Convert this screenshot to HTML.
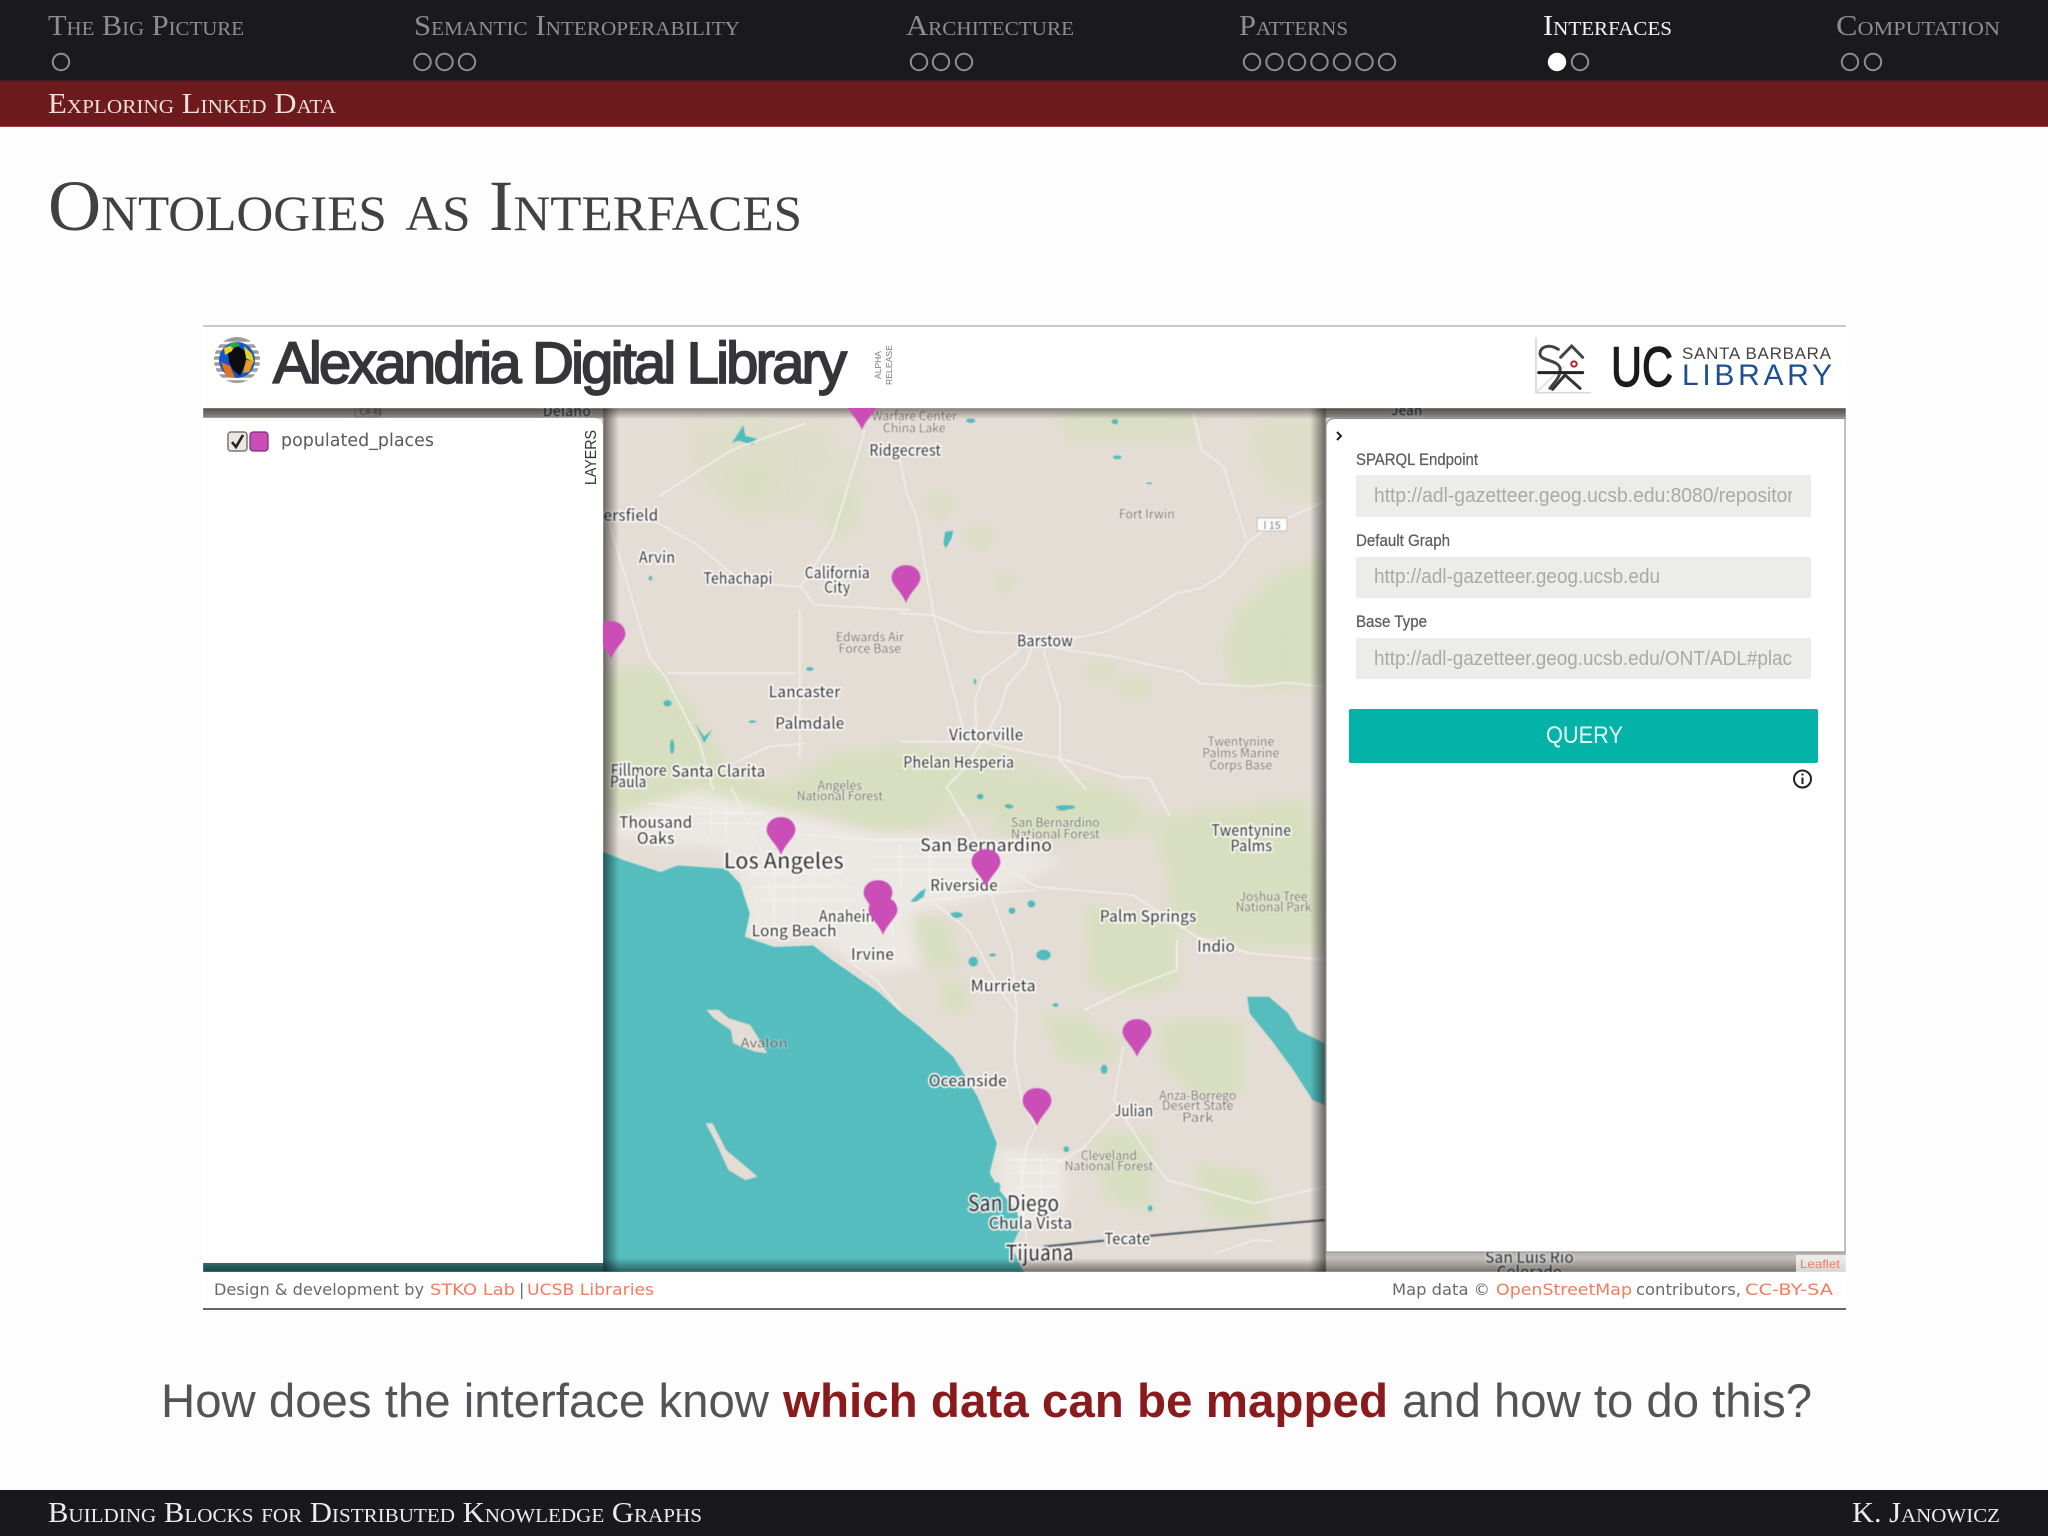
<!DOCTYPE html>
<html><head><meta charset="utf-8"><title>Ontologies as Interfaces</title>
<style>
html,body{margin:0;padding:0;background:#fdfdfe}
svg{display:block}
.sc{font-family:"Liberation Serif",serif;font-variant:small-caps}
.m{font-family:"Noto Sans CJK JP","Liberation Sans",sans-serif;font-size:12.5px;fill:#2e2e2e;text-anchor:middle;stroke:#fff;stroke-width:2.4px;stroke-opacity:.85;paint-order:stroke;stroke-linejoin:round;font-weight:500}
.g{font-family:"Noto Sans CJK JP","Liberation Sans",sans-serif;font-size:10px;fill:#75716c;text-anchor:middle;stroke:#fff;stroke-width:1.2px;stroke-opacity:.4;paint-order:stroke}
.l{font-size:16.5px}
.lab{font-family:"Liberation Sans",sans-serif;font-size:17px;fill:#5c5c5c;stroke:#5c5c5c;stroke-width:.25px}
.inp{font-family:"Liberation Sans",sans-serif;font-size:20px;fill:#a9a9a7}
.foot{font-family:"DejaVu Sans","Liberation Sans",sans-serif;font-size:16px;fill:#6a6a6a}
.or{fill:#f37c5e}
.road{fill:none;stroke:#f1eee9;stroke-width:1.6;vector-effect:non-scaling-stroke;stroke-linejoin:round}
.road2{fill:none;stroke:#f6f4f0;stroke-width:1;vector-effect:non-scaling-stroke}
</style></head><body>
<svg xmlns="http://www.w3.org/2000/svg" width="2048" height="1536" viewBox="0 0 2048 1536">
<defs>
<clipPath id="mapc"><rect x="203" y="408" width="1643" height="864"/></clipPath>
<clipPath id="i1"><rect x="1374" y="475" width="418" height="42"/></clipPath>
<clipPath id="i3"><rect x="1374" y="638" width="418" height="42"/></clipPath>
<filter id="b6" x="-30%" y="-30%" width="160%" height="160%"><feGaussianBlur stdDeviation="6"/></filter>
<filter id="b16" x="-30%" y="-30%" width="160%" height="160%"><feGaussianBlur stdDeviation="16"/></filter>
<filter id="b1" x="0" y="0" width="100%" height="100%"><feGaussianBlur stdDeviation="0.5"/></filter>
<linearGradient id="sr" x1="0" x2="1" y1="0" y2="0"><stop offset="0" stop-color="#000" stop-opacity=".55"/><stop offset="1" stop-color="#000" stop-opacity="0"/></linearGradient>
<linearGradient id="sl" x1="1" x2="0" y1="0" y2="0"><stop offset="0" stop-color="#000" stop-opacity=".55"/><stop offset="1" stop-color="#000" stop-opacity="0"/></linearGradient>
<linearGradient id="st" x1="0" x2="0" y1="0" y2="1"><stop offset="0" stop-color="#000" stop-opacity=".45"/><stop offset="1" stop-color="#000" stop-opacity="0"/></linearGradient>
<linearGradient id="sb" x1="0" x2="0" y1="1" y2="0"><stop offset="0" stop-color="#000" stop-opacity=".5"/><stop offset="1" stop-color="#000" stop-opacity="0"/></linearGradient>
<path id="pin" d="M0 0C-5 -12 -14.5 -18 -14.5 -25C-14.5 -33 -8 -38 0 -38C8 -38 14.5 -33 14.5 -25C14.5 -18 5 -12 0 0Z" fill="#cb4db7"/>
</defs>

<rect width="2048" height="1536" fill="#fdfdfe"/>

<!-- top nav -->
<rect width="2048" height="81" fill="#1a1a1c"/>
<rect y="81" width="2048" height="46" fill="#6d1a1c"/>
<rect y="80" width="2048" height="2" fill="#4a1a20"/>
<rect y="126" width="2048" height="1" fill="#b03a44"/>
<g fill="#8d8d8d" font-size="29" class="sc">
<text x="48" y="35" textLength="196" lengthAdjust="spacingAndGlyphs">The Big Picture</text>
<text x="414" y="35" textLength="326" lengthAdjust="spacingAndGlyphs">Semantic Interoperability</text>
<text x="906" y="35" textLength="168" lengthAdjust="spacingAndGlyphs">Architecture</text>
<text x="1239" y="35" textLength="109" lengthAdjust="spacingAndGlyphs">Patterns</text>
<text x="1543" y="35" textLength="129" lengthAdjust="spacingAndGlyphs" fill="#f4f4f4">Interfaces</text>
<text x="1836" y="35" textLength="164" lengthAdjust="spacingAndGlyphs">Computation</text>
</g>
<g fill="none" stroke="#8d8d8d" stroke-width="2">
<circle cx="61" cy="62" r="8.2"/>
<circle cx="422.5" cy="62" r="8.2"/><circle cx="444.5" cy="62" r="8.2"/><circle cx="467" cy="62" r="8.2"/>
<circle cx="919" cy="62" r="8.2"/><circle cx="941" cy="62" r="8.2"/><circle cx="964" cy="62" r="8.2"/>
<circle cx="1252" cy="62" r="8.2"/><circle cx="1274.5" cy="62" r="8.2"/><circle cx="1297" cy="62" r="8.2"/><circle cx="1319.5" cy="62" r="8.2"/><circle cx="1342" cy="62" r="8.2"/><circle cx="1364.5" cy="62" r="8.2"/><circle cx="1387" cy="62" r="8.2"/>
<circle cx="1580" cy="62" r="8.2"/>
<circle cx="1850" cy="62" r="8.2"/><circle cx="1873" cy="62" r="8.2"/>
</g>
<circle cx="1557" cy="62" r="9.2" fill="#fff"/>
<text x="48" y="113" class="sc" font-size="29" fill="#efe0da" textLength="288" lengthAdjust="spacingAndGlyphs">Exploring Linked Data</text>

<!-- title -->
<text x="48" y="230" class="sc" font-size="72" fill="#414143" textLength="754" lengthAdjust="spacingAndGlyphs">Ontologies as Interfaces</text>

<!-- app header -->
<rect x="203" y="325" width="1643" height="2" fill="#c9c9c9"/>
<rect x="203" y="327" width="1643" height="81" fill="#fff"/>

<!-- globe -->
<g>
<circle cx="237" cy="360" r="23" fill="#9b9b9b"/>
<g stroke="#fff" stroke-width="2.4"><path d="M212 343H262M212 349H262M212 355H262M212 361H262M212 367H262M212 373H262M212 379H262"/></g>
<circle cx="237" cy="360" r="18" fill="#1556c8"/>
<path d="M228 352L238 346L246 352L246 362L240 376L233 370L229 362Z" fill="#0b0b10"/>
<path d="M224 348L235 344L232 351L225 355ZM244 346L252 354L254 362L246 358Z" fill="#e9d31d"/>
<path d="M221 362L230 366L235 378L226 376Z" fill="#e8701c"/>
<path d="M246 360L254 361L249 372L243 373Z" fill="#ef9a1c"/>
<path d="M229 343L238 342L240 346L232 348Z" fill="#27a844"/>
</g>
<text x="273" y="383" font-family="'Liberation Sans',sans-serif" font-size="58" fill="#35353a" stroke="#35353a" stroke-width="1.8" textLength="574" lengthAdjust="spacing">Alexandria Digital Library</text>
<g font-family="'Liberation Sans',sans-serif" font-size="8" fill="#777">
<text transform="translate(881,379) rotate(-90)" textLength="28" lengthAdjust="spacingAndGlyphs">ALPHA</text>
<text transform="translate(892,385) rotate(-90)" textLength="40" lengthAdjust="spacingAndGlyphs">RELEASE</text>
</g>

<!-- SK logo -->
<g transform="translate(1500,320) scale(.3333)" fill="none" stroke-linecap="round">
<path d="M108 55V218H270" stroke="#d8d8d8" stroke-width="5"/>
<path d="M112 214L190 140" stroke="#e0e0e0" stroke-width="5"/>
<path d="M175 88C150 72 122 78 120 100C119 125 175 118 180 145C184 170 160 190 150 205" stroke="#444" stroke-width="9"/>
<path d="M116 158H248" stroke="#222" stroke-width="9"/>
<path d="M182 112L215 78L248 112" stroke="#444" stroke-width="9"/>
<path d="M195 165L240 205M195 165L158 208" stroke="#333" stroke-width="9"/>
<circle cx="222" cy="132" r="8" stroke="#b4222e" stroke-width="6"/>
</g>
<text x="1611" y="386" font-family="'Liberation Sans',sans-serif" font-size="56" fill="#1b1b1e" stroke="#1b1b1e" stroke-width="1.4" textLength="62" lengthAdjust="spacingAndGlyphs">UC</text>
<text x="1682" y="359" font-family="'Liberation Sans',sans-serif" font-size="17" fill="#444" textLength="149" lengthAdjust="spacing">SANTA BARBARA</text>
<text x="1682" y="385" font-family="'Liberation Sans',sans-serif" font-size="30" fill="#1d4f92" textLength="150" lengthAdjust="spacing">LIBRARY</text>

<!-- MAP -->
<g clip-path="url(#mapc)">
<g filter="url(#b1)">
<rect x="203" y="408" width="1643" height="864" fill="#e4ddd6"/>

<!-- green patches in full-view coordinates -->
<g transform="scale(1.30612)" fill="#d8dfc0" filter="url(#b6)">
<path d="M525 325L575 320L640 325L620 395L570 400L530 370Z" opacity=".55"/>
<path d="M630 340L665 345L662 400L640 420L625 395Z" opacity=".45"/>
<path d="M812 315H895V332H812Z" opacity=".55"/>
<path d="M960 320H1015V385L975 380L955 350Z" opacity=".65"/>
<path d="M945 470L975 440L1015 425V525H950L945 495Z"/>
<path d="M463 520L500 510L530 540L560 590L600 600L640 575L700 570L760 590L850 600L870 640L800 620L700 625L620 625L570 625L500 625L463 625Z"/>
<path d="M880 625L1000 610L1015 660V715L940 690L890 660Z"/>
<path d="M690 590L760 570L830 600L790 625L700 620Z" opacity=".8"/>
</g>
<!-- zoom5 coordinate space -->
<g transform="translate(600,780) scale(.4847,.3333)">
<g fill="#d8dfc0" filter="url(#b16)">
<path d="M640 410L720 420L745 560L690 580L650 500Z"/>
<path d="M700 600L765 610L760 710L710 700Z"/>
<path d="M910 700L1000 710L1080 800L1040 860L950 840Z"/>
<path d="M1000 370L1190 430L1200 620L1100 650L1010 620Z"/>
<path d="M1170 230L1490 240V500L1330 500L1180 440Z"/>
<path d="M1150 720L1330 720V950L1220 940L1160 860Z"/>
<path d="M1020 1060L1140 1060L1140 1300L1040 1260Z"/>
<path d="M1220 1140L1370 1180L1380 1330L1260 1320Z"/>
<path d="M480 60L660 30L720 120L600 170L500 130Z"/>
<path d="M800 60L1100 40L1150 150L960 180L820 170Z"/>
</g>
<!-- urban -->
<g fill="#ece8e3" filter="url(#b16)">
<path d="M200 30L560 160L720 170L960 240L820 340L640 400L660 560L560 580L450 480L300 480L290 300L240 200L130 200L30 160L40 110Z"/>
<path d="M820 1100L960 1130L960 1280L880 1340L820 1280Z"/>
</g>
<!-- ocean -->
<path fill="#54bdbe" stroke="#fff" stroke-opacity=".5" stroke-width="2" d="M8 215L50 240L125 275L160 255L260 265L290 310L310 400L300 470L360 500L440 495L480 540L520 580L575 635L620 695L660 740L730 830L780 950L820 1090L805 1180L830 1240L860 1290L870 1340L850 1400L880 1490L-900 1490V215Z"/>
<path fill="#e4ddd6" d="M220 690L245 690L265 715L310 735L325 770L345 820L320 815L275 790L270 750L235 715Z"/>
<path fill="#e4ddd6" d="M218 1030L232 1030L260 1110L325 1190L300 1200L265 1170L240 1090Z"/>
<path fill="#54bdbe" d="M1335 650L1380 650L1420 700L1440 750L1495 790V975L1470 960L1430 870L1390 790L1340 700Z"/>
<!-- small water -->
<g fill="#4fbcbe">
<path d="M640 365L660 335L672 325L668 350L650 368Z"/>
<ellipse cx="735" cy="405" rx="13" ry="9"/><ellipse cx="890" cy="372" rx="8" ry="11"/><ellipse cx="850" cy="392" rx="7" ry="10"/>
<ellipse cx="770" cy="545" rx="10" ry="15"/><ellipse cx="915" cy="525" rx="15" ry="16"/><ellipse cx="960" cy="82" rx="20" ry="7"/>
<ellipse cx="845" cy="80" rx="8" ry="6"/><ellipse cx="785" cy="50" rx="6" ry="9"/><ellipse cx="810" cy="525" rx="7" ry="5"/>
<ellipse cx="940" cy="675" rx="6" ry="6"/><ellipse cx="1040" cy="868" rx="7" ry="14"/><ellipse cx="962" cy="1108" rx="6" ry="9"/>
<ellipse cx="1135" cy="1285" rx="5" ry="9"/><ellipse cx="820" cy="1220" rx="6" ry="14"/>
</g>
<!-- roads -->
<g class="road">
<path class="road" d="M400 160L560 180L680 180L800 230L900 320L1100 345L1230 470L1340 520L1495 540"/>
<path class="road" d="M800 320L850 520L860 700L855 830L870 960L900 1040L880 1100L870 1230L880 1380"/>
<path class="road" d="M690 370L760 450L830 640L860 700"/>
<path class="road" d="M620 690L570 600L510 540"/>
<path class="road" d="M270 20L330 200L360 400M100 70L300 100M450 270L600 400L610 560"/>
<path class="road" d="M610 375L800 340L900 330"/>
<path class="road" d="M740 80L760 130L790 220"/>
<path class="road" d="M1000 690L1100 620L1190 570L1190 480"/>
<path class="road" d="M1080 800L1060 960L1120 1100L1170 1200L1350 1270L1495 1220"/>
<path class="road" d="M910 1180L1000 1100L1060 1000"/>
<path class="road" d="M1270 1420L1350 1380L1390 1385"/>
</g>
<g class="road2">
<path class="road2" d="M230 70V170M260 70V190M200 100H340M200 130H340M310 280H500M320 320H520M320 360H540M360 260V460M400 250V460M440 250V470M620 190V320M680 190V320M560 230H780M560 270H780M840 1140H950M850 1180H950M860 1220H950M870 1130V1290M910 1130V1290"/>
</g>
<path d="M915 1400L1040 1382M1130 1368L1495 1320" stroke="#5a6570" stroke-width="2.5" vector-effect="non-scaling-stroke" fill="none"/>
</g>
<!-- zoom7 coordinate space -->
<g transform="translate(900,400) scale(.3333)">
<g fill="#d8dfc0" filter="url(#b16)" opacity=".7">
<ellipse cx="120" cy="315" rx="48" ry="50"/><ellipse cx="240" cy="410" rx="42" ry="48"/><ellipse cx="315" cy="545" rx="38" ry="40"/>
<rect x="555" y="780" width="95" height="70"/><rect x="660" y="825" width="95" height="80"/><rect x="500" y="30" width="390" height="100"/>
<path d="M970 720L1020 630L1170 650L1180 860L980 850Z"/>
</g>
<g fill="#4fbcbe">
<ellipse cx="212" cy="62" rx="14" ry="7"/><ellipse cx="645" cy="65" rx="10" ry="8"/><ellipse cx="652" cy="172" rx="13" ry="6"/>
<path d="M135 395L160 392L155 415L138 445L130 432Z"/><ellipse cx="748" cy="250" rx="9" ry="3"/>
<ellipse cx="240" cy="1190" rx="10" ry="8"/><ellipse cx="325" cy="1218" rx="11" ry="6"/><path d="M465 1232L525 1215L495 1232Z"/><ellipse cx="225" cy="845" rx="4" ry="9"/>
</g>
<g class="road">
<path class="road" d="M520 715L620 695L750 630L830 580L900 565L960 530L1000 490L1040 430L1100 385L1270 305"/>
<path class="road" d="M470 745L640 770L850 815L900 850L1050 860L1160 848L1270 860"/>
<path class="road" d="M395 745L380 790L320 860L300 930L200 1100L140 1160L190 1250"/>
<path class="road" d="M0 640L100 645L220 695L350 700"/>
<path class="road" d="M0 180L20 280L50 350L100 640L190 990"/>
<path class="road" d="M430 750L480 920L480 1080L560 1170M360 750L250 830L225 900L230 1010"/>
<path class="road" d="M0 1025H240L350 1050L480 1075L660 1130L750 1135L810 1250"/>
<path class="road" d="M880 40L905 150L970 200L1040 420"/>
</g>
</g>
<!-- zoom3 coordinate space -->
<g transform="translate(190,310) scale(.4591,.3333)">
<g fill="#d8dfc0" filter="url(#b16)" opacity=".8">
<path d="M900 1080L1030 1080L1130 1380L900 1440Z"/>
<path d="M1170 480L1290 450L1250 610L1190 560Z"/>
<path d="M1390 560L1450 540L1440 680L1400 660Z"/>
</g>
<g fill="#4fbcbe">
<path d="M1180 400L1205 345L1210 378L1235 385L1225 405L1195 392Z"/>
<path d="M1100 1240L1120 1280L1138 1258L1120 1300Z"/><ellipse cx="1050" cy="1310" rx="5" ry="22"/><ellipse cx="1040" cy="1180" rx="9" ry="10"/>
<ellipse cx="1350" cy="1077" rx="8" ry="6"/><ellipse cx="1225" cy="1235" rx="8" ry="4"/><ellipse cx="1003" cy="805" rx="4" ry="7"/>
</g>
<g class="road">
<path class="road" d="M905 600L1000 1040L1035 1100L1110 1300L1140 1440"/>
<path class="road" d="M1020 640L1100 700L1180 790L1190 815L1330 830L1360 885L1568 900"/>
<path class="road" d="M1328 900V1340"/>
<path class="road" d="M1470 360L1400 680L1330 830"/>
<path class="road" d="M1020 560L1180 420L1340 340"/>
<path class="road" d="M1040 1090H1320"/>
<path class="road" d="M1140 1390L1260 1310L1340 1300"/>
</g>
</g>

<!-- labels -->
<g transform="scale(1.30612)">
<text class="g" x="700" y="322" textLength="65" lengthAdjust="spacingAndGlyphs">Warfare Center</text>
<text class="g" x="700" y="331" textLength="48" lengthAdjust="spacingAndGlyphs">China Lake</text>
<text class="m" x="693" y="349" textLength="55" lengthAdjust="spacingAndGlyphs">Ridgecrest</text>
<text class="g" x="878" y="397" textLength="43" lengthAdjust="spacingAndGlyphs">Fort Irwin</text>
<text class="m" x="483" y="399" textLength="42" lengthAdjust="spacingAndGlyphs">ersfield</text>
<text class="m" x="503" y="431" textLength="28" lengthAdjust="spacingAndGlyphs">Arvin</text>
<text class="m" x="565" y="447" textLength="53" lengthAdjust="spacingAndGlyphs">Tehachapi</text>
<text class="m" x="641" y="443" textLength="50" lengthAdjust="spacingAndGlyphs">California</text>
<text class="m" x="641" y="454" textLength="20" lengthAdjust="spacingAndGlyphs">City</text>
<text class="g" x="666" y="491" textLength="52" lengthAdjust="spacingAndGlyphs">Edwards Air</text>
<text class="g" x="666" y="500" textLength="48" lengthAdjust="spacingAndGlyphs">Force Base</text>
<text class="m" x="800" y="495" textLength="43" lengthAdjust="spacingAndGlyphs">Barstow</text>
<text class="m" x="616" y="534" textLength="55" lengthAdjust="spacingAndGlyphs">Lancaster</text>
<text class="m" x="620" y="558" textLength="53" lengthAdjust="spacingAndGlyphs">Palmdale</text>
<text class="m" x="755" y="567" textLength="57" lengthAdjust="spacingAndGlyphs">Victorville</text>
<text class="m" x="734" y="588" textLength="85" lengthAdjust="spacingAndGlyphs">Phelan Hesperia</text>
<text class="g" x="950" y="571" textLength="51" lengthAdjust="spacingAndGlyphs">Twentynine</text>
<text class="g" x="950" y="580" textLength="59" lengthAdjust="spacingAndGlyphs">Palms Marine</text>
<text class="g" x="950" y="589" textLength="48" lengthAdjust="spacingAndGlyphs">Corps Base</text>
<text class="m" x="489" y="594" textLength="43" lengthAdjust="spacingAndGlyphs">Fillmore</text>
<text class="m" x="550" y="595" textLength="72" lengthAdjust="spacingAndGlyphs">Santa Clarita</text>
<text class="m" x="481" y="603" textLength="28" lengthAdjust="spacingAndGlyphs">Paula</text>
<text class="g" x="643" y="605" textLength="34" lengthAdjust="spacingAndGlyphs">Angeles</text>
<text class="g" x="643" y="613" textLength="66" lengthAdjust="spacingAndGlyphs">National Forest</text>
<text class="m" x="502" y="634" textLength="56" lengthAdjust="spacingAndGlyphs">Thousand</text>
<text class="m" x="502" y="646" textLength="29" lengthAdjust="spacingAndGlyphs">Oaks</text>
<text class="m l" x="600" y="665" textLength="92" lengthAdjust="spacingAndGlyphs">Los Angeles</text>
<text class="g" x="808" y="633" textLength="68" lengthAdjust="spacingAndGlyphs">San Bernardino</text>
<text class="g" x="808" y="642" textLength="68" lengthAdjust="spacingAndGlyphs">National Forest</text>
<text class="m" x="755" y="652" style="font-size:14px" textLength="101" lengthAdjust="spacingAndGlyphs">San Bernardino</text>
<text class="m" x="958" y="640" textLength="61" lengthAdjust="spacingAndGlyphs">Twentynine</text>
<text class="m" x="958" y="652" textLength="32" lengthAdjust="spacingAndGlyphs">Palms</text>
<text class="m" x="738" y="682" textLength="52" lengthAdjust="spacingAndGlyphs">Riverside</text>
<text class="g" x="975" y="690" textLength="52" lengthAdjust="spacingAndGlyphs">Joshua Tree</text>
<text class="g" x="975" y="698" textLength="58" lengthAdjust="spacingAndGlyphs">National Park</text>
<text class="m" x="650" y="706" textLength="46" lengthAdjust="spacingAndGlyphs">Anaheim</text>
<text class="m" x="608" y="717" textLength="65" lengthAdjust="spacingAndGlyphs">Long Beach</text>
<text class="m" x="879" y="706" textLength="74" lengthAdjust="spacingAndGlyphs">Palm Springs</text>
<text class="m" x="931" y="729" textLength="29" lengthAdjust="spacingAndGlyphs">Indio</text>
<text class="m" x="668" y="735" textLength="33" lengthAdjust="spacingAndGlyphs">Irvine</text>
<text class="m" x="768" y="759" textLength="50" lengthAdjust="spacingAndGlyphs">Murrieta</text>
<text class="g" x="585" y="802" style="fill:#555" textLength="36" lengthAdjust="spacingAndGlyphs">Avalon</text>
<text class="m" x="741" y="832" textLength="60" lengthAdjust="spacingAndGlyphs">Oceanside</text>
<text class="m" x="868" y="855" textLength="30" lengthAdjust="spacingAndGlyphs">Julian</text>
<text class="g" x="917" y="842" textLength="59" lengthAdjust="spacingAndGlyphs">Anza-Borrego</text>
<text class="g" x="917" y="850" textLength="55" lengthAdjust="spacingAndGlyphs">Desert State</text>
<text class="g" x="917" y="859" textLength="24" lengthAdjust="spacingAndGlyphs">Park</text>
<text class="g" x="849" y="888" textLength="43" lengthAdjust="spacingAndGlyphs">Cleveland</text>
<text class="g" x="849" y="896" textLength="68" lengthAdjust="spacingAndGlyphs">National Forest</text>
<text class="m l" x="776" y="927" textLength="70" lengthAdjust="spacingAndGlyphs">San Diego</text>
<text class="m" x="789" y="941" textLength="64" lengthAdjust="spacingAndGlyphs">Chula Vista</text>
<text class="m" x="863" y="953" textLength="35" lengthAdjust="spacingAndGlyphs">Tecate</text>
<text class="m l" x="796" y="965" textLength="52" lengthAdjust="spacingAndGlyphs">Tijuana</text>
<text class="m" x="1171" y="967" textLength="68" lengthAdjust="spacingAndGlyphs">San Luis Rio</text>
<text class="m" x="1171" y="978" textLength="50" lengthAdjust="spacingAndGlyphs">Colorado</text>
<text class="m" x="434" y="319" textLength="37" lengthAdjust="spacingAndGlyphs">Delano</text>
<text class="m" x="1077" y="318" textLength="24" lengthAdjust="spacingAndGlyphs">Jean</text>
</g>
<rect x="1257" y="518" width="30" height="13" fill="#fbfbf9" stroke="#bbb"/>
<text x="1272" y="529" font-family="'Noto Sans CJK JP',sans-serif" font-size="10.5" text-anchor="middle" fill="#555">I 15</text>
<rect x="355" y="408" width="24" height="9" fill="#e4ddd6" stroke="#aaa"/>
<text x="371" y="415" font-family="'Noto Sans CJK JP',sans-serif" font-size="9" text-anchor="middle" fill="#555">CA 41</text>

<!-- shadows -->
<rect x="603" y="408" width="16" height="864" fill="url(#sr)"/>
<rect x="1310" y="408" width="16" height="864" fill="url(#sl)"/>
<rect x="203" y="408" width="1643" height="11" fill="url(#st)"/>
<rect x="203" y="1258" width="1643" height="14" fill="url(#sb)"/>
<rect x="203" y="408" width="400" height="10" fill="#000" opacity=".35"/>
<rect x="1326" y="408" width="520" height="10" fill="#000" opacity=".35"/>
<rect x="203" y="1262" width="400" height="10" fill="#000" opacity=".3"/>
<rect x="1326" y="1252" width="520" height="20" fill="url(#sb)" opacity=".4" transform="rotate(180 1586 1262)"/>

<!-- pins -->
<use href="#pin" x="862" y="430"/>
<use href="#pin" x="906" y="603"/>
<use href="#pin" x="611" y="659"/>
<use href="#pin" x="781" y="855"/>
<use href="#pin" x="986" y="887"/>
<use href="#pin" x="878" y="918"/>
<use href="#pin" x="883" y="935"/>
<use href="#pin" x="1137" y="1057"/>
<use href="#pin" x="1037" y="1126"/>
</g>
</g>

<!-- left panel -->
<path d="M203 418H593Q603 418 603 428V1263H203Z" fill="#fff"/>
<rect x="228" y="432" width="19" height="19" rx="3" fill="#eae6e2" stroke="#777" stroke-width="1.5"/>
<path d="M232 442L236 447L243 435" fill="none" stroke="#2a2222" stroke-width="2.6"/>
<rect x="250" y="432" width="18" height="19" rx="3" fill="#cb4db7" stroke="#77306f" stroke-width="1.2"/>
<text x="281" y="446" font-family="'DejaVu Sans',sans-serif" font-size="18" fill="#5a5a5a" textLength="153" lengthAdjust="spacingAndGlyphs">populated_places</text>
<text transform="translate(596,485) rotate(-90)" font-family="'Liberation Sans',sans-serif" font-size="16" fill="#333" textLength="55" lengthAdjust="spacingAndGlyphs">LAYERS</text>

<!-- right panel -->
<path d="M1336 418.500H1845V1252H1326V428Q1326 418.500 1336 418.500Z" fill="#fff" stroke="#8a8a8a" stroke-width="1"/>
<path d="M1337 432L1341 436L1337 440" fill="none" stroke="#222" stroke-width="2"/>
<text x="1356" y="465" class="lab" textLength="122" lengthAdjust="spacingAndGlyphs">SPARQL Endpoint</text>
<rect x="1356" y="475" width="455" height="42" fill="#ececea"/>
<g clip-path="url(#i1)"><text x="1374" y="502" class="inp" textLength="424" lengthAdjust="spacingAndGlyphs">http://adl-gazetteer.geog.ucsb.edu:8080/repositori</text></g>
<text x="1356" y="546" class="lab" textLength="94" lengthAdjust="spacingAndGlyphs">Default Graph</text>
<rect x="1356" y="557" width="455" height="41" fill="#ececea"/>
<text x="1374" y="583" class="inp" textLength="286" lengthAdjust="spacingAndGlyphs">http://adl-gazetteer.geog.ucsb.edu</text>
<text x="1356" y="627" class="lab" textLength="71" lengthAdjust="spacingAndGlyphs">Base Type</text>
<rect x="1356" y="638" width="455" height="41" fill="#ececea"/>
<g clip-path="url(#i3)"><text x="1374" y="665" class="inp" textLength="418" lengthAdjust="spacingAndGlyphs">http://adl-gazetteer.geog.ucsb.edu/ONT/ADL#plac</text></g>
<rect x="1349" y="709" width="469" height="54" rx="2" fill="#04b3a8"/>
<text x="1546" y="743" font-family="'Liberation Sans',sans-serif" font-size="24" fill="#e9fbf9" textLength="77" lengthAdjust="spacingAndGlyphs">QUERY</text>
<circle cx="1802.500" cy="779" r="8.500" fill="none" stroke="#222" stroke-width="2"/>
<path d="M1802.500 777.500V784M1802.500 773.500V775.500" stroke="#222" stroke-width="2"/>

<!-- leaflet -->
<rect x="1796" y="1255" width="50" height="17" fill="#fff" opacity=".7"/>
<text x="1800" y="1268" font-family="'Liberation Sans',sans-serif" font-size="12" fill="#f37c5e" textLength="40" lengthAdjust="spacingAndGlyphs">Leaflet</text>

<!-- app footer -->
<rect x="203" y="1272" width="1643" height="36" fill="#fff"/>
<rect x="203" y="1308" width="1643" height="2" fill="#666"/>
<text x="214" y="1295" class="foot" textLength="210" lengthAdjust="spacingAndGlyphs">Design &amp; development by</text>
<text x="430" y="1295" class="foot or" textLength="85" lengthAdjust="spacingAndGlyphs">STKO Lab</text>
<text x="519" y="1295" class="foot">|</text>
<text x="527" y="1295" class="foot or" textLength="127" lengthAdjust="spacingAndGlyphs">UCSB Libraries</text>
<text x="1392" y="1295" class="foot" textLength="98" lengthAdjust="spacingAndGlyphs">Map data ©</text>
<text x="1496" y="1295" class="foot or" textLength="136" lengthAdjust="spacingAndGlyphs">OpenStreetMap</text>
<text x="1636" y="1295" class="foot" textLength="105" lengthAdjust="spacingAndGlyphs">contributors,</text>
<text x="1745" y="1295" class="foot or" textLength="88" lengthAdjust="spacingAndGlyphs">CC-BY-SA</text>

<!-- question -->
<g font-family="'Liberation Sans',sans-serif" font-size="47">
<text x="161" y="1417" fill="#545457" textLength="608" lengthAdjust="spacingAndGlyphs">How does the interface know</text>
<text x="783" y="1417" fill="#8a1a1b" font-weight="bold" textLength="605" lengthAdjust="spacingAndGlyphs">which data can be mapped</text>
<text x="1402" y="1417" fill="#545457" textLength="410" lengthAdjust="spacingAndGlyphs">and how to do this?</text>
</g>

<!-- bottom bar -->
<rect y="1490" width="2048" height="46" fill="#19191d"/>
<text x="48" y="1522" class="sc" font-size="29" fill="#ececec" textLength="654" lengthAdjust="spacingAndGlyphs">Building Blocks for Distributed Knowledge Graphs</text>
<text x="1852" y="1522" class="sc" font-size="29" fill="#ececec" textLength="148" lengthAdjust="spacingAndGlyphs">K. Janowicz</text>
</svg>
</body></html>
